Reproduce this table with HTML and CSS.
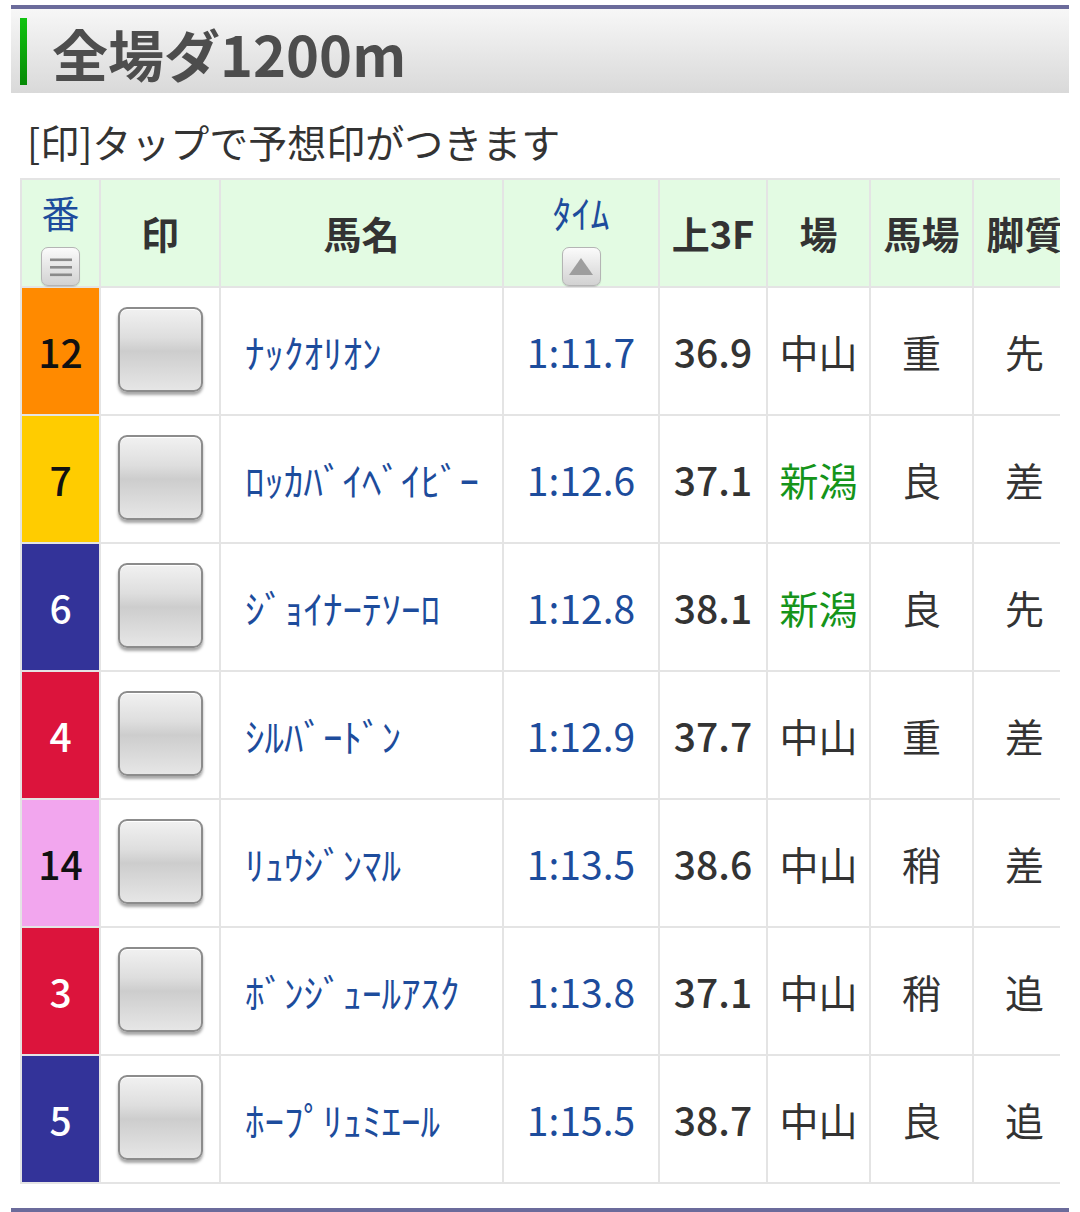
FILE: index.html
```html
<!DOCTYPE html>
<html lang="ja">
<head>
<meta charset="utf-8">
<title>全場ダ1200m</title>
<link rel="stylesheet" href="styles.css">
</head>
<body>
<div class="page">
  <h1 class="race-title"><span class="accent"></span><span class="title-text">全場ダ1200m</span></h1>
  <p class="hint">[印]タップで予想印がつきます</p>
  <div class="table-wrap">
    <table class="results">
      <thead>
        <tr>
          <th class="c-num"><div class="h-stack"><span class="h-link">番</span><span class="sort-btn"><svg width="24" height="20" viewBox="0 0 24 20"><rect x="1" y="1.5" width="22" height="2.6" fill="#8a8a8a"/><rect x="1" y="9" width="22" height="2.6" fill="#8a8a8a"/><rect x="1" y="16.5" width="22" height="2.6" fill="#8a8a8a"/></svg></span></div></th>
          <th class="c-mark">印</th>
          <th class="c-name">馬名</th>
          <th class="c-time"><div class="h-stack"><span class="h-link">ﾀｲﾑ</span><span class="sort-btn"><svg width="24" height="17" viewBox="0 0 24 17"><polygon points="12,0 24,17 0,17" fill="#9e9e9e"/></svg></span></div></th>
          <th class="c-f3">上3F</th>
          <th class="c-place">場</th>
          <th class="c-track">馬場</th>
          <th class="c-style">脚質</th>
        </tr>
      </thead>
      <tbody>
        <tr>
          <td class="num waku-orange">12</td>
          <td class="mark"><span class="mark-btn"></span></td>
          <td class="name">ﾅｯｸｵﾘｵﾝ</td>
          <td class="time">1:11.7</td>
          <td class="f3">36.9</td>
          <td class="place">中山</td>
          <td>重</td>
          <td>先</td>
        </tr>
        <tr>
          <td class="num waku-yellow">7</td>
          <td class="mark"><span class="mark-btn"></span></td>
          <td class="name">ﾛｯｶﾊﾞｲﾍﾞｲﾋﾞｰ</td>
          <td class="time">1:12.6</td>
          <td class="f3">37.1</td>
          <td class="place local">新潟</td>
          <td>良</td>
          <td>差</td>
        </tr>
        <tr>
          <td class="num waku-blue">6</td>
          <td class="mark"><span class="mark-btn"></span></td>
          <td class="name">ｼﾞｮｲﾅｰﾃｿｰﾛ</td>
          <td class="time">1:12.8</td>
          <td class="f3">38.1</td>
          <td class="place local">新潟</td>
          <td>良</td>
          <td>先</td>
        </tr>
        <tr>
          <td class="num waku-red">4</td>
          <td class="mark"><span class="mark-btn"></span></td>
          <td class="name">ｼﾙﾊﾞｰﾄﾞﾝ</td>
          <td class="time">1:12.9</td>
          <td class="f3">37.7</td>
          <td class="place">中山</td>
          <td>重</td>
          <td>差</td>
        </tr>
        <tr>
          <td class="num waku-pink">14</td>
          <td class="mark"><span class="mark-btn"></span></td>
          <td class="name">ﾘｭｳｼﾞﾝﾏﾙ</td>
          <td class="time">1:13.5</td>
          <td class="f3">38.6</td>
          <td class="place">中山</td>
          <td>稍</td>
          <td>差</td>
        </tr>
        <tr>
          <td class="num waku-red">3</td>
          <td class="mark"><span class="mark-btn"></span></td>
          <td class="name">ﾎﾞﾝｼﾞｭｰﾙｱｽｸ</td>
          <td class="time">1:13.8</td>
          <td class="f3">37.1</td>
          <td class="place">中山</td>
          <td>稍</td>
          <td>追</td>
        </tr>
        <tr>
          <td class="num waku-blue">5</td>
          <td class="mark"><span class="mark-btn"></span></td>
          <td class="name">ﾎｰﾌﾟﾘｭﾐｴｰﾙ</td>
          <td class="time">1:15.5</td>
          <td class="f3">38.7</td>
          <td class="place">中山</td>
          <td>良</td>
          <td>追</td>
        </tr>
      </tbody>
    </table>
  </div>
  <div class="bottom-rule"></div>
</div>
</body>
</html>
```

FILE: styles.css
```css
* { box-sizing: border-box; }

html, body {
  margin: 0;
  padding: 0;
  background: #ffffff;
}

body {
  font-family: "Noto Sans CJK JP", "Noto Sans", sans-serif;
  color: #333333;
}

.page {
  padding: 5px 11px 0 11px;
}

.race-title {
  margin: 0;
  height: 88px;
  border-top: 4px solid #6b6b9b;
  background: linear-gradient(#f7f7f7, #d9d9d9);
  display: flex;
  align-items: center;
  font-size: 56px;
  font-weight: 700;
  color: #4d4d4d;
  line-height: 1;
}

.accent {
  display: block;
  width: 7px;
  height: 67px;
  margin-left: 9px;
  margin-right: 25px;
  background: linear-gradient(#11c311, #068a06);
}

.title-text {
  display: block;
  padding-top: 4px;
}

.hint {
  margin: 20px 0 0 16px;
  font-size: 39px;
  line-height: 56px;
  color: #333333;
}

.table-wrap {
  margin: 9px 0 0 9px;
  width: 1040px;
  overflow: hidden;
}

.results {
  border-collapse: separate;
  border-spacing: 0;
  table-layout: fixed;
  width: 1057px;
  border-top: 2px solid #e4e4e4;
  border-left: 2px solid #e4e4e4;
  font-size: 39px;
}

.results th,
.results td {
  border-right: 2px solid #e4e4e4;
  border-bottom: 2px solid #e4e4e4;
  padding: 0;
  text-align: center;
  vertical-align: middle;
  white-space: nowrap;
}

.results th {
  height: 108px;
  background: #e3fbe3;
  font-weight: 700;
  font-size: 38px;
  color: #333333;
  line-height: 44px;
}

.results td {
  height: 128px;
  line-height: 44px;
}

.c-num { width: 79px; }
.c-mark { width: 120px; }
.c-name { width: 283px; }
.c-time { width: 156px; }
.c-f3 { width: 108px; }
.c-place { width: 103px; }
.c-track { width: 103px; }
.c-style { width: 103px; }

.results th.c-num,
.results th.c-time {
  vertical-align: top;
}

.h-stack {
  display: flex;
  flex-direction: column;
  align-items: center;
  padding-top: 10px;
}

.h-link {
  font-weight: 400;
  color: #1d4c9c;
  height: 44px;
}

.sort-btn {
  margin-top: 13px;
  width: 39px;
  height: 39px;
  border: 1px solid #b4b4b4;
  border-radius: 7px;
  background: linear-gradient(#fbfbfb, #e6e6e6 50%, #d2d2d2);
  box-shadow: 0 1px 1px rgba(0, 0, 0, 0.15);
  display: flex;
  align-items: center;
  justify-content: center;
}

.num {
  font-weight: 500;
  color: #ffffff;
}

.waku-orange { background: #ff8a00; color: #111111; }
.waku-yellow { background: #ffcc00; color: #111111; }
.waku-blue { background: #333399; }
.waku-red { background: #dc143c; }
.waku-pink { background: #f2a6ee; color: #111111; }

.mark-btn {
  display: inline-block;
  vertical-align: middle;
  width: 85px;
  height: 85px;
  margin-top: -3px;
  border: 2px solid #8c8c8c;
  border-radius: 9px;
  background: linear-gradient(#f1f1f1 0%, #dedede 35%, #cdcdcd 52%, #d9d9d9 75%, #e6e6e6 100%);
  box-shadow: inset 0 1px 0 #ffffff, 0 3px 3px rgba(0, 0, 0, 0.35);
}

.results td.name {
  text-align: left;
  padding-left: 24px;
  color: #1d4c9c;
}

.time {
  color: #1d4c9c;
}

.f3 {
  font-weight: 500;
  color: #333333;
}

.local {
  color: #15941a;
}

.bottom-rule {
  margin-top: 24px;
  height: 5px;
  background: #6b6b9b;
}
```
